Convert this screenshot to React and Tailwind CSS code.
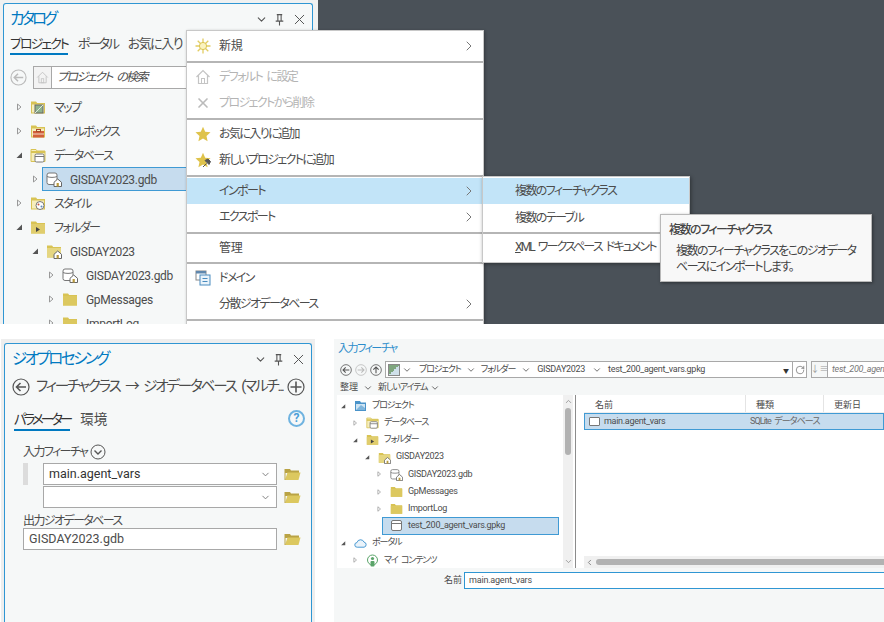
import { ChevronDown, ChevronRight, ChevronLeft, ChevronUp, X, RotateCw } from "lucide-react";

// The reference font squeezes kana, so labels holding kana get negative tracking
const tight = (s) => (/[\u3040-\u30ff]/.test(String(s)) ? "tracking-[-1.6px] [word-spacing:3px]" : "tracking-[-0.3px]");
const tightSmall = (s) => (/[\u3040-\u30ff]/.test(String(s)) ? "tracking-[-1.1px] [word-spacing:2px]" : "tracking-[-0.3px]");

// Small icons drawn to match the ArcGIS Pro glyphs
const Caret = ({ open }) => (
  <svg viewBox="0 0 8 8" className="h-2 w-full shrink-0">
    {open ? <path d="M7 1.5V7H1.5z" fill="#555" /> : <path d="M2.5 1l3.5 3-3.5 3z" fill="none" stroke="#999" />}
  </svg>
);

const FolderBase = ({ children, className = "h-4 w-4" }) => (
  <svg viewBox="0 0 16 16" className={`shrink-0 ${className}`}>
    <path d="M1 2.5h5l1.2 1.5H15v10.5H1z" fill="#d8c354" />
    <rect x="2" y="5.5" width="12" height="8" fill="#f6eebd" />
    {children}
  </svg>
);

const Folder = ({ className }) => (
  <FolderBase className={className}>
    <rect x="1" y="5" width="14" height="9.5" fill="#dcc85f" />
  </FolderBase>
);

const HomeBadge = () => (
  <g>
    <path d="M8 15.5v-4.2L11.7 8l3.8 3.3v4.2z" fill="#fff" stroke="#666" strokeWidth="1" />
    <rect x="10.6" y="12" width="2.2" height="3.5" fill="#b89a3c" />
  </g>
);

const MapFolder = () => (
  <FolderBase>
    <rect x="5" y="6" width="8" height="8" fill="#8fb28c" stroke="#666" />
    <path d="M5 14l8-8" stroke="#dfe9dd" />
  </FolderBase>
);

const ToolboxFolder = () => (
  <FolderBase>
    <rect x="3" y="8" width="11" height="6.5" fill="#d2603a" />
    <rect x="6.5" y="6.5" width="4" height="2" fill="none" stroke="#a94a2c" />
    <rect x="3" y="10.5" width="11" height="1" fill="#f2d9c8" />
  </FolderBase>
);

const DbFolder = ({ className }) => (
  <svg viewBox="0 0 16 16" className={`shrink-0 ${className || "h-4 w-4"}`}>
    <path d="M1 2.5h5l1.2 1.5H15v10.5H1z" fill="#f6eebd" stroke="#d8c354" />
    <rect x="1" y="4" width="14" height="2" fill="#d8c354" />
    <rect x="5" y="7" width="9" height="8" rx="1.5" fill="#fff" stroke="#777" />
    <path d="M5 9.5h9" stroke="#777" />
  </svg>
);

const StyleFolder = () => (
  <FolderBase>
    <circle cx="10" cy="10.5" r="4" fill="#fff" stroke="#777" />
    <circle cx="8.5" cy="9.5" r="1" fill="#c9573a" />
    <circle cx="11.5" cy="11.5" r="1" fill="#5b8cbd" />
  </FolderBase>
);

const ArrowFolder = ({ className }) => (
  <FolderBase className={className}>
    <rect x="1" y="5" width="14" height="9.5" fill="#e0cd6d" />
    <path d="M6 8v5l4-2.5z" fill="#444" />
  </FolderBase>
);

const HomeFolder = ({ className }) => (
  <FolderBase className={className}>
    <rect x="1" y="5" width="14" height="9.5" fill="#e5d681" />
    <HomeBadge />
  </FolderBase>
);

const Gdb = ({ className }) => (
  <svg viewBox="0 0 16 16" className={`shrink-0 ${className || "h-4 w-4"}`}>
    <rect x="1" y="2" width="10" height="11.5" rx="2" fill="#fff" stroke="#777" />
    <path d="M1 5.5c2 1.2 8 1.2 10 0" fill="none" stroke="#777" />
    <HomeBadge />
  </svg>
);

const Gpkg = () => (
  <svg viewBox="0 0 13 13" className="h-[13px] w-[13px] shrink-0">
    <rect x="1.5" y="1.5" width="10" height="10" rx="1.5" fill="#fff" stroke="#777" />
    <path d="M1.5 4.5h10" stroke="#777" />
  </svg>
);

const ProjectIcon = () => (
  <svg viewBox="0 0 13 13" className="h-[13px] w-[13px] shrink-0">
    <path d="M1 2h5l1 1.5h5V12H1z" fill="#4a93c9" />
    <rect x="2" y="5" width="9" height="6" fill="#cfe4f3" />
    <path d="M2 11l5-5 4 3v2z" fill="#7fb5dc" />
  </svg>
);

const PortalIcon = () => (
  <svg viewBox="0 0 14 13" className="h-[13px] w-[13px] shrink-0">
    <path d="M3.5 10.5a2.5 2.5 0 0 1-.3-5A4 4 0 0 1 10.8 5a2.8 2.8 0 0 1 0 5.5z" fill="#eaf3fa" stroke="#3f93cf" />
  </svg>
);

const ContentIcon = () => (
  <svg viewBox="0 0 13 13" className="h-[13px] w-[13px] shrink-0">
    <circle cx="6.5" cy="6" r="5" fill="#fff" stroke="#5aa469" />
    <circle cx="6.5" cy="4.5" r="1.6" fill="#5aa469" />
    <rect x="4.5" y="7" width="4" height="5.5" rx="1" fill="#5aa469" />
  </svg>
);

const Sun = () => (
  <svg viewBox="0 0 16 16" className="h-4 w-4">
    <path d="M8 .5v15M.5 8h15M2.7 2.7l10.6 10.6M13.3 2.7L2.7 13.3" stroke="#e2cd62" strokeWidth="1.3" />
    <circle cx="8" cy="8" r="3.6" fill="#fbf3bf" stroke="#dcc552" />
  </svg>
);

const HomeIcon = ({ className = "h-[18px] w-[18px]", color = "#c4c4c4" }) => (
  <svg viewBox="0 0 16 16" className={className}>
    <path d="M1.5 8L8 1.5 14.5 8M3.5 6.5V14.5h9V6.5" fill="none" stroke={color} strokeWidth="1.2" />
    <rect x="6.5" y="9.5" width="3" height="5" fill="none" stroke={color} />
  </svg>
);

const STAR = "M8 .8l2.2 4.9 5.3.6-4 3.6 1.1 5.3L8 12.5l-4.6 2.7 1.1-5.3-4-3.6 5.3-.6z";

const Star = () => (
  <svg viewBox="0 0 16 16" className="h-4 w-4">
    <path d={STAR} fill="#dfc34b" />
  </svg>
);

const PinStar = () => (
  <svg viewBox="0 0 16 16" className="h-4 w-4">
    <path d={STAR} fill="#dfc34b" />
    <path d="M8 15l3.5-3.5M10 8.5l4 4 1.5-3-2.5-2.5z" fill="#555" stroke="#555" />
  </svg>
);

const DomainIcon = () => (
  <svg viewBox="0 0 16 16" className="h-4 w-4">
    <rect x="1" y="1" width="10" height="9" fill="#fff" stroke="#888" />
    <rect x="1" y="1" width="10" height="2.5" fill="#5f87ad" />
    <rect x="5" y="5" width="10" height="10" fill="#eaf3fa" stroke="#4a8cbf" />
    <path d="M7.5 8.5h5M7.5 11.5h5" stroke="#4a8cbf" />
  </svg>
);

const CircleBtn = ({ d, className = "h-[18px] w-[18px]", color = "#555" }) => (
  <svg viewBox="0 0 18 18" className={`shrink-0 ${className}`} fill="none" stroke={color}>
    <circle cx="9" cy="9" r="8" strokeWidth="1.2" />
    <path d={d} strokeWidth="1.6" />
  </svg>
);

const ARROW_LEFT = "M14 9H4.5M8.5 5L4.5 9l4 4";
const ARROW_RIGHT = "M4 9h9.5M9.5 5l4 4-4 4";
const ARROW_UP = "M9 14V4.5M5 8.5l4-4 4 4";

const Pin = ({ className = "h-[13px] w-[13px]" }) => (
  <svg viewBox="0 0 12 12" className={className} fill="none" stroke="#555">
    <path d="M3.5 1.5h5M4.5 1.5v5.5M7.5 1.5v5.5M2.5 7.5h7M6 7.5v4" />
  </svg>
);

const OpenFolder = () => (
  <svg viewBox="0 0 17 14" className="h-[14px] w-[17px] shrink-0">
    <path d="M1 2h5l1 1.5h8V6H1z" fill="#b9a345" />
    <path d="M1 13l2.5-7.5H16.5L14.5 13z" fill="#dcc85f" />
    <path d="M1 2v11" stroke="#b9a345" />
  </svg>
);

const PanelControls = () => (
  <div className="ml-auto flex items-center gap-[5px] pr-[4px] text-[#555]">
    <ChevronDown size={13} strokeWidth={2} />
    <Pin />
    <X size={17} strokeWidth={1.4} />
  </div>
);

// One row of a tree; "small" is the denser one in the file dialog
const TreeRow = ({ pad, open, leaf, icon, label, selected, small }) => (
  <div className={`flex items-center ${pad} ${small ? "h-[17.2px] text-[9px]" : "h-[24px] text-[12px]"}`}>
    <div className={small ? "w-[6px] shrink-0" : "w-2 shrink-0"}>{!leaf && <Caret open={open} />}</div>
    <div
      className={`flex h-full min-w-0 flex-1 items-center whitespace-nowrap border ${small ? "mr-[4px] pl-[7px]" : "ml-[3px] pl-[3px]"} ${
        selected ? "border-[#3f9ad4] bg-[#c6dcee]" : "border-transparent"
      }`}
    >
      {icon}
      <span className={small ? `ml-[5px] ${tightSmall(label)}` : `ml-2 pt-[1px] ${tight(label)}`}>{label}</span>
    </div>
  </div>
);

const MenuItem = ({ icon, label, arrow, active, disabled }) => (
  <div className={`relative flex h-[26px] items-center whitespace-nowrap pl-[32px] pr-[6px] text-[12px] ${active ? "bg-[#c2e4f8]" : ""} ${disabled ? "text-[#b4b4b4]" : "text-[#4c4c4c]"}`}>
    {icon && <span className="absolute left-[8px] top-[5px]">{icon}</span>}
    <span className={tight(label)}>{label}</span>
    {arrow && <ChevronRight size={16} strokeWidth={1.5} className="ml-auto text-[#777]" />}
  </div>
);

const Sep = ({ className = "h-[5px]" }) => (
  <div className={`flex items-center ${className}`}>
    <div className="h-[2px] w-full bg-[#b5b5b5]" />
  </div>
);

const TextBox = ({ children, arrow, className = "" }) => (
  <div className={`flex h-[22px] items-center border border-[#a8a8a8] bg-white pl-[5px] pr-[5px] text-[12.5px] text-[#4c4c4c] ${className}`}>
    <span>{children}</span>
    {arrow && <ChevronDown size={11} strokeWidth={2} className="ml-auto text-[#777]" />}
  </div>
);

const Crumb = ({ label, className = "" }) => (
  <>
    <ChevronDown size={10} strokeWidth={2} className={`shrink-0 text-[#555] ${className}`} />
    <span className={`whitespace-nowrap ${tightSmall(label)}`}>{label}</span>
  </>
);

const Catalog = () => (
  <div className="h-[324px] w-[318px] shrink-0 overflow-hidden bg-[#f0f1f1] pl-[3px] pt-[3px]">
    <div className="h-full w-[310px] rounded-t-[3px] border border-b-0 border-[#2f96d3] bg-[#f6f8f8]">
      <div className="flex h-[30px] items-center pl-[6px]">
        <h1 className="pt-[2px] text-[15.5px] tracking-[-3px] text-[#0079c1]">カタログ</h1>
        <PanelControls />
      </div>
      <div className="flex h-[21px] items-start pl-[6px] text-[13px] leading-[20px] text-[#4c4c4c]">
        <span className="h-[21px] border-b-2 border-[#0079c1] tracking-[-2px] text-[#333]">プロジェクト</span>
        <span className="ml-[10px] tracking-[-2.2px]">ポータル</span>
        <span className="ml-[10px] tracking-[-1.5px]">お気に入り</span>
      </div>
      <div className="mt-[10px] flex h-[24px] items-center pl-[6px]">
        <CircleBtn d={ARROW_LEFT} className="h-[17px] w-[17px]" color="#bbb" />
        <div className="ml-[6px] flex h-[23px] flex-1 items-center border border-[#a8a8a8] bg-white">
          <div className="flex h-full w-[18px] items-center justify-center border-r border-[#a8a8a8] bg-[#f3f3f3]">
            <HomeIcon className="h-[13px] w-[13px]" />
          </div>
          <span className="pl-[5px] text-[12px] italic tracking-[-1.6px] [word-spacing:3px] text-[#4c4c4c]">プロジェクト の検索</span>
        </div>
      </div>
      <div className="mt-[6px] text-[#4c4c4c]">
        <TreeRow pad="pl-[11px]" icon={<MapFolder />} label="マップ" />
        <TreeRow pad="pl-[11px]" icon={<ToolboxFolder />} label="ツールボックス" />
        <TreeRow pad="pl-[11px]" open icon={<DbFolder />} label="データベース" />
        <TreeRow pad="pl-[27px]" selected icon={<Gdb />} label="GISDAY2023.gdb" />
        <TreeRow pad="pl-[11px]" icon={<StyleFolder />} label="スタイル" />
        <TreeRow pad="pl-[11px]" open icon={<ArrowFolder />} label="フォルダー" />
        <TreeRow pad="pl-[27px]" open icon={<HomeFolder />} label="GISDAY2023" />
        <TreeRow pad="pl-[43px]" icon={<Gdb />} label="GISDAY2023.gdb" />
        <TreeRow pad="pl-[43px]" icon={<Folder />} label="GpMessages" />
        <TreeRow pad="pl-[43px]" icon={<Folder />} label="ImportLog" />
      </div>
    </div>
  </div>
);

const ContextMenus = () => (
  <>
    <div className="absolute left-[186px] top-[30px] h-[300px] w-[298px] border border-[#c8c8c8] bg-white pt-[2px] shadow-[1px_1px_3px_rgba(0,0,0,0.3)]">
      <MenuItem icon={<Sun />} label="新規" arrow />
      <Sep />
      <MenuItem icon={<HomeIcon className="h-4 w-4" />} label="デフォルト に設定" disabled />
      <MenuItem icon={<X size={16} strokeWidth={2.5} className="text-[#bbb]" />} label="プロジェクトから削除" disabled />
      <Sep />
      <MenuItem icon={<Star />} label="お気に入りに追加" />
      <MenuItem icon={<PinStar />} label="新しいプロジェクトに追加" />
      <Sep />
      <MenuItem label="インポート" arrow active />
      <MenuItem label="エクスポート" arrow />
      <Sep />
      <MenuItem label="管理" />
      <Sep className="h-[4px]" />
      <MenuItem icon={<DomainIcon />} label="ドメイン" />
      <MenuItem label="分散ジオデータベース" arrow />
      <Sep />
    </div>
    <div className="absolute left-[482px] top-[176px] h-[87px] w-[208px] border border-[#c8c8c8] bg-white pt-[1px] shadow-[1px_1px_4px_rgba(0,0,0,0.4)]">
      <MenuItem label="複数のフィーチャクラス" active />
      <div className="mt-[1px]">
        <MenuItem label="複数のテーブル" />
      </div>
      <Sep className="h-[3px]" />
      <MenuItem
        label={
          <span className="tracking-[-1.9px] [word-spacing:3px]">
            <span className="underline">X</span>ML ワークスペース ドキュメント
          </span>
        }
      />
    </div>
    <div className="absolute left-[660px] top-[214px] h-[68px] w-[212px] border border-[#b8b8b8] bg-[#f8f8f8] pl-[8px] pt-[6px] text-[12px] tracking-[-1.5px] text-[#444] shadow-[1px_1px_3px_rgba(0,0,0,0.4)]">
      <div className="font-medium leading-[18px]">複数のフィーチャクラス</div>
      <div className="mt-[4px] whitespace-nowrap pl-[7px] leading-[16px]">
        複数のフィーチャクラスをこのジオデータ
        <br />
        ベースにインポートします。
      </div>
    </div>
  </>
);

const Geoprocessing = () => (
  <div className="ml-[1px] w-[314px] shrink-0 bg-[#eeeeee] px-[3px] pt-[4px]">
    <div className="h-full rounded-t-[3px] border border-b-0 border-[#2f96d3] bg-[#f6f8f8] text-[#4c4c4c]">
      <div className="flex h-[31px] items-center pl-[7px]">
        <h2 className="pt-[1px] text-[15.5px] tracking-[-2.5px] text-[#0079c1]">ジオプロセシング</h2>
        <PanelControls />
      </div>
      <div className="flex h-[24px] items-center pl-[7px] pr-[6px] text-[14.5px]">
        <CircleBtn d={ARROW_LEFT} />
        <span className="ml-[6px] whitespace-nowrap tracking-[-2.1px] [word-spacing:4px]">フィーチャクラス → ジオデータベース (マルチ...</span>
        <CircleBtn d="M9 3.5v11M3.5 9h11" className="ml-auto h-[18px] w-[18px]" />
      </div>
      <div className="mt-[11px] flex h-[21px] items-start pl-[9px] pr-[6px] text-[13.5px] leading-[19px]">
        <span className="h-[21px] border-b-2 border-[#0079c1] tracking-[-3px] text-[#333]">パラメーター</span>
        <span className="ml-[10px]">環境</span>
        <span className="ml-auto flex h-[17px] w-[17px] items-center justify-center rounded-full border-2 border-[#6fb3e0] text-[12px] font-bold text-[#4a9fd8]">?</span>
      </div>
      <div className="mt-[12px] pl-[18px] pr-[10px] text-[12px]">
        <div className="flex h-[18px] items-center">
          <span className="tracking-[-1.6px]">入力フィーチャ</span>
          <svg viewBox="0 0 16 16" className="ml-[3px] h-4 w-4" fill="none" stroke="#555">
            <circle cx="8" cy="8" r="7" />
            <path d="M4.5 6.5L8 10l3.5-3.5" strokeWidth="1.4" />
          </svg>
        </div>
        <div className="mt-[2px] flex items-center">
          <div className="h-[22px] w-[5px] shrink-0 bg-[#dcdcdc]" />
          <TextBox arrow className="ml-[15px] w-[235px] text-[#333]">main.agent_vars</TextBox>
          <div className="ml-[7px]"><OpenFolder /></div>
        </div>
        <div className="mt-[1px] flex items-center">
          <TextBox arrow className="ml-[20px] w-[235px]" />
          <div className="ml-[7px]"><OpenFolder /></div>
        </div>
        <div className="mt-[5px] flex h-[15px] items-center tracking-[-1.6px]">出力ジオデータベース</div>
        <div className="flex items-center">
          <TextBox className="w-[255px]">GISDAY2023.gdb</TextBox>
          <div className="ml-[7px]"><OpenFolder /></div>
        </div>
      </div>
    </div>
  </div>
);

const FileDialog = () => (
  <div className="ml-[19px] flex min-w-0 flex-1 flex-col overflow-hidden bg-[#f5f7f7] text-[9px] text-[#4c4c4c]">
    <div className="flex h-[18px] items-center pl-[4px] pt-[3px] text-[11px] tracking-[-1.5px] text-[#2b8ccb]">入力フィーチャ</div>
    <div className="mt-[4px] flex h-[17px] items-center pl-[6px]">
      <CircleBtn d={ARROW_LEFT} className="h-[12px] w-[12px]" />
      <CircleBtn d={ARROW_RIGHT} className="ml-[3px] h-[12px] w-[12px]" color="#bbb" />
      <CircleBtn d={ARROW_UP} className="ml-[3px] h-[12px] w-[12px]" />
      <div className="ml-[3px] flex h-[17px] w-[408px] shrink-0 items-center border border-[#a8a8a8] bg-white pt-[1px]">
        <div className="ml-[2px] h-[12px] w-[12px] shrink-0 border border-[#888] bg-[linear-gradient(135deg,#7fa67f_50%,#cfe0ea_50%)]" />
        <Crumb label="プロジェクト" className="ml-[2px] mr-[7px]" />
        <Crumb label="フォルダー" className="ml-[5px] mr-[5px]" />
        <Crumb label="GISDAY2023" className="ml-[6px] mr-[6px]" />
        <Crumb label="test_200_agent_vars.gpkg" className="ml-[7px] mr-[6px]" />
        <span className="ml-auto mr-[3px] text-[6px] text-[#333]">▼</span>
      </div>
      <div className="flex h-[17px] w-[14px] shrink-0 items-center justify-center border-y border-r border-[#a8a8a8] bg-white">
        <RotateCw size={10} strokeWidth={1.4} />
      </div>
      <div className="ml-[4px] flex h-[17px] w-[17px] shrink-0 items-center justify-center border border-[#a8a8a8] text-[9px] text-[#999]">↓≡</div>
      <div className="flex h-[17px] flex-1 items-center overflow-hidden whitespace-nowrap border-y border-[#a8a8a8] bg-white pl-[4px] italic tracking-[-0.3px] text-[#777]">test_200_agent_vars.gpkg</div>
    </div>
    <div className="flex h-[17px] items-center pl-[6px] pt-[2px]">
      <span>整理</span>
      <ChevronDown size={10} strokeWidth={2} className="ml-[5px]" />
      <span className="ml-[5px] tracking-[-1.1px]">新しいアイテム</span>
      <ChevronDown size={10} strokeWidth={2} className="ml-[3px]" />
    </div>
    <div className="ml-[3px] flex h-[173px] bg-white">
      <div className="w-[226px] shrink-0 overflow-hidden pt-[2px]">
        <TreeRow small pad="pl-[3px]" open icon={<ProjectIcon />} label="プロジェクト" />
        <TreeRow small pad="pl-[15px]" icon={<DbFolder className="h-[13px] w-[13px]" />} label="データベース" />
        <TreeRow small pad="pl-[15px]" open icon={<ArrowFolder className="h-[13px] w-[13px]" />} label="フォルダー" />
        <TreeRow small pad="pl-[27px]" open icon={<HomeFolder className="h-[13px] w-[13px]" />} label="GISDAY2023" />
        <TreeRow small pad="pl-[39px]" icon={<Gdb className="h-[13px] w-[13px]" />} label="GISDAY2023.gdb" />
        <TreeRow small pad="pl-[39px]" icon={<Folder className="h-[13px] w-[13px]" />} label="GpMessages" />
        <TreeRow small pad="pl-[39px]" icon={<Folder className="h-[13px] w-[13px]" />} label="ImportLog" />
        <TreeRow small pad="pl-[39px]" leaf selected icon={<Gpkg />} label="test_200_agent_vars.gpkg" />
        <TreeRow small pad="pl-[3px]" open icon={<PortalIcon />} label="ポータル" />
        <TreeRow small pad="pl-[15px]" icon={<ContentIcon />} label="マイ コンテンツ" />
      </div>
      <div className="flex w-[10px] shrink-0 flex-col items-center bg-[#f0f0f0] text-[#888]">
        <ChevronUp size={9} strokeWidth={2} className="mt-[2px]" />
        <div className="mt-[2px] h-[47px] w-[6px] rounded-[3px] bg-[#b2b2b2]" />
        <ChevronDown size={9} strokeWidth={2} className="mb-[2px] mt-auto" />
      </div>
      <div className="mx-[2px] w-px shrink-0 bg-[#8c8c8c]" />
      <div className="flex min-w-0 flex-1 flex-col pl-[6px]">
        <div className="flex h-[18px] shrink-0 items-center border-b border-[#eeeeee]">
          <div className="h-full w-[162px] shrink-0 border-r border-[#e4e4e4] pl-[11px] leading-[20px]">名前</div>
          <div className="h-full w-[78px] shrink-0 border-r border-[#e4e4e4] pl-[10px] leading-[20px]">種類</div>
          <div className="h-full pl-[10px] leading-[20px]">更新日</div>
        </div>
        <div className="flex h-[17px] shrink-0 items-center whitespace-nowrap border border-[#3f9ad4] bg-[#c6dcee]">
          <div className="ml-[4px] h-[9px] w-[11px] shrink-0 rounded-[1px] border border-[#777] bg-white" />
          <span className="ml-[4px] w-[146px] shrink-0 tracking-[-0.3px]">main.agent_vars</span>
          <span className="w-[71px] shrink-0 overflow-hidden tracking-[-0.9px] [word-spacing:2px] text-[#666]">SQLite データベース コ</span>
        </div>
        <div className="mt-auto flex h-[12px] shrink-0 items-center bg-[#f0f0f0] text-[#777]">
          <ChevronLeft size={9} strokeWidth={2.2} className="ml-[1px] shrink-0" />
          <div className="ml-[2px] h-[6px] flex-1 rounded-l-[3px] bg-[#b2b2b2]" />
        </div>
      </div>
    </div>
    <div className="mt-[4px] flex h-[17px] items-center">
      <span className="ml-[110px] w-[20px] shrink-0 pt-[1px]">名前</span>
      <div className="flex h-full flex-1 items-center border-y border-l border-[#2f96d3] bg-white pl-[4px] pt-[1px] tracking-[-0.2px]">main.agent_vars</div>
    </div>
  </div>
);

export default function App() {
  return (
    <div className="h-[622px] w-[884px] overflow-hidden bg-white [font-family:'Roboto','Noto_Sans_CJK_JP',sans-serif] [font-feature-settings:'palt']">
      <div className="relative flex h-[324px] overflow-hidden bg-[#4a5158]">
        <Catalog />
        <ContextMenus />
      </div>
      <div className="flex h-[298px] pt-[15px]">
        <Geoprocessing />
        <FileDialog />
      </div>
    </div>
  );
}
